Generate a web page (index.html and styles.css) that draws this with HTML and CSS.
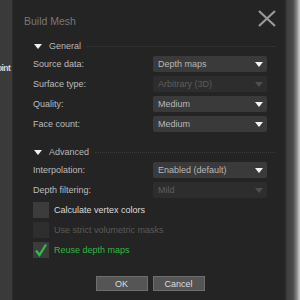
FILE: index.html
```html
<!DOCTYPE html>
<html lang="en">
<head>
    <meta charset="UTF-8">
    <title>Build Mesh</title>
    <link rel="stylesheet" href="styles.css">
</head>
<body>
    <div class="side-left">
        <span class="side-text">oint</span>
    </div>
    <div class="dialog">
        <div class="title-bar">
            <span class="title">Build Mesh</span>
            <svg class="close" width="18" height="17" viewBox="0 0 18 17">
                <path d="M1 1 L17 16 M17 1 L1 16" stroke="#9a9a9a" stroke-width="2.2" fill="none"/>
            </svg>
        </div>

        <div class="section">
            <span class="tri"></span>
            <span class="section-name">General</span>
            <span class="dots"></span>
        </div>
        <div class="row">
            <span class="label">Source data:</span>
            <div class="select">Depth maps<span class="arrow"></span></div>
        </div>
        <div class="row">
            <span class="label">Surface type:</span>
            <div class="select disabled">Arbitrary (3D)<span class="arrow"></span></div>
        </div>
        <div class="row">
            <span class="label">Quality:</span>
            <div class="select">Medium<span class="arrow"></span></div>
        </div>
        <div class="row">
            <span class="label">Face count:</span>
            <div class="select">Medium<span class="arrow"></span></div>
        </div>

        <div class="section advanced">
            <span class="tri"></span>
            <span class="section-name">Advanced</span>
            <span class="dots"></span>
        </div>
        <div class="row">
            <span class="label">Interpolation:</span>
            <div class="select">Enabled (default)<span class="arrow"></span></div>
        </div>
        <div class="row">
            <span class="label">Depth filtering:</span>
            <div class="select disabled">Mild<span class="arrow"></span></div>
        </div>

        <div class="check-row">
            <span class="box"></span>
            <span class="check-label">Calculate vertex colors</span>
        </div>
        <div class="check-row off">
            <span class="box"></span>
            <span class="check-label">Use strict volumetric masks</span>
        </div>
        <div class="check-row on">
            <span class="box">
                <svg width="16" height="16" viewBox="0 0 16 16">
                    <path d="M3 8.5 L6.5 13 L13 2.5" stroke="#2fbf45" stroke-width="2.2" fill="none"/>
                </svg>
            </span>
            <span class="check-label">Reuse depth maps</span>
        </div>

        <div class="buttons">
            <button class="btn">OK</button>
            <button class="btn">Cancel</button>
        </div>
    </div>
    <div class="side-right"></div>
</body>
</html>
```

FILE: styles.css
```css
body {
    margin: 0;
    width: 300px;
    height: 300px;
    display: flex;
    overflow: hidden;
    font-family: "Liberation Sans", Arial, sans-serif;
    font-size: 9px;
    background-color: #242424;
}

/* Bords de l'application derrière */
.side-left {
    width: 12px;
    background-color: #3a3a3a;
    border-right: 1px solid #2c2c2c;
    overflow: hidden;
}

.side-text {
    display: block;
    margin-top: 63px;
    margin-left: -3px;
    color: #d8d8d8;
    font-weight: bold;
    font-size: 8.5px;
    letter-spacing: -0.6px;
    white-space: nowrap;
}

.side-right {
    width: 15px;
    background: linear-gradient(to right, #2a2a2a 0, #3e3e3e 2px, #4a4a4a 8px, #8a8a8a 12px, #d4d4d4 15px);
}

/* Dialogue */
.dialog {
    width: 272px;
    background-color: #242424;
    padding: 0 18px 0 20px;
    box-sizing: border-box;
}

.title-bar {
    height: 38px;
    display: flex;
    align-items: center;
    justify-content: space-between;
    margin-left: -9px;
    box-sizing: border-box;
}

.title {
    color: #777777;
    font-size: 10.5px;
    margin-top: 3px;
}

.close {
    margin-right: -9px;
    margin-bottom: 2px;
}

.section {
    height: 16px;
    display: flex;
    align-items: center;
}

.section.advanced {
    margin-top: 10px;
}

.tri {
    width: 0;
    height: 0;
    margin-left: 1px;
    border-left: 4px solid transparent;
    border-right: 4px solid transparent;
    border-top: 5px solid #f0f0f0;
}

.section-name {
    color: #b8b8b8;
    margin-left: 7px;
}

.dots {
    flex: 1;
    margin-left: 6px;
    margin-right: -8px;
    border-top: 1px dotted #3a3a3a;
}

.row {
    height: 20px;
    display: flex;
    align-items: center;
}

.label {
    width: 120px;
    color: #bdbdbd;
}

.select {
    flex: 1;
    height: 16px;
    display: flex;
    align-items: center;
    justify-content: space-between;
    padding: 0 4px 0 5px;
    background-color: #3a3a3a;
    color: #b8b8b8;
    border-radius: 2px;
}

.select .arrow {
    width: 0;
    height: 0;
    border-left: 4px solid transparent;
    border-right: 4px solid transparent;
    border-top: 5px solid #f4f4f4;
}

.select.disabled {
    background-color: #2d2d2d;
    color: #5e5e5e;
}

.select.disabled .arrow {
    border-top-color: #4e4e4e;
}

/* Cases à cocher */
.check-row {
    height: 20px;
    display: flex;
    align-items: center;
}

.box {
    width: 16px;
    height: 16px;
    background-color: #3c3c3c;
    display: flex;
}

.check-label {
    margin-left: 5px;
    color: #dcdcdc;
}

.check-row.off .box {
    background-color: #2e2e2e;
}

.check-row.off .check-label {
    color: #5a5a5a;
}

.check-row.on .check-label {
    color: #2fb845;
}

/* Boutons */
.buttons {
    margin-top: 16px;
    display: flex;
    justify-content: center;
    gap: 5px;
}

.btn {
    width: 52px;
    height: 15px;
    padding: 0;
    background-color: #555555;
    border: 1px solid #6e6e6e;
    color: #dcdcdc;
    font-family: "Liberation Sans", Arial, sans-serif;
    font-size: 9px;
}
```
